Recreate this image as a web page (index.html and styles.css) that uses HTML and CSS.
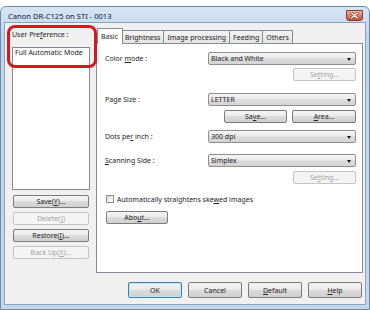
FILE: index.html
```html
<!DOCTYPE html>
<html lang="en">
<head>
    <meta charset="UTF-8">
    <title>Canon DR-C125 on STI - 0013</title>
    <link rel="stylesheet" href="styles.css">
</head>
<body>
    <div class="window">
        <header class="titlebar">
            <span class="title">Canon DR-C125 on STI - 0013</span>
            <button class="close-btn" aria-label="Close">
                <svg width="9" height="7" viewBox="0 0 9 7">
                    <path d="M1.5 1 L7.5 6 M7.5 1 L1.5 6" stroke="#7a3326" stroke-width="2.6" stroke-linecap="round"/>
                    <path d="M1.5 1 L7.5 6 M7.5 1 L1.5 6" stroke="#ffffff" stroke-width="1.4" stroke-linecap="round"/>
                </svg>
            </button>
        </header>

        <div class="client">
            <div class="main">
                <!-- user preference list -->
                <aside class="prefs">
                    <div class="prefs-label">User Pre<span class="key">f</span>erence :</div>
                    <ul class="pref-list">
                        <li>Full Automatic Mode</li>
                    </ul>
                    <button class="btn side-btn">Save(<span class="key">Y</span>)...</button>
                    <button class="btn side-btn" disabled>Delete(<span class="key">J</span>)</button>
                    <button class="btn side-btn">Restore(<span class="key">I</span>)...</button>
                    <button class="btn side-btn" disabled>Back Up(<span class="key">X</span>)...</button>
                </aside>

                <!-- tab control -->
                <section class="tabs">
                    <nav class="tab-strip">
                        <span class="tab active">Basic</span>
                        <span class="tab">Brightness</span>
                        <span class="tab">Image processing</span>
                        <span class="tab">Feeding</span>
                        <span class="tab">Others</span>
                    </nav>
                    <div class="tab-panel">
                        <div class="field">
                            <span>Color <span class="key">m</span>ode :</span>
                            <div class="dropdown">Black and White</div>
                        </div>
                        <div class="button-row row-setting">
                            <button class="btn panel-btn" disabled>Se<span class="key">t</span>ting...</button>
                        </div>

                        <div class="field row-page">
                            <span>Page Size :</span>
                            <div class="dropdown">LETTER</div>
                        </div>
                        <div class="button-row row-save">
                            <button class="btn panel-btn">Sa<span class="key">v</span>e...</button>
                            <button class="btn panel-btn area-btn"><span class="key">A</span>rea...</button>
                        </div>

                        <div class="field row-dpi">
                            <span>Dots pe<span class="key">r</span> inch :</span>
                            <div class="dropdown">300 dpi</div>
                        </div>

                        <div class="field row-side">
                            <span><span class="key">S</span>canning Side :</span>
                            <div class="dropdown">Simplex</div>
                        </div>
                        <div class="button-row row-setting2">
                            <button class="btn panel-btn" disabled>Se<span class="key">t</span>ting...</button>
                        </div>

                        <label class="check-row">
                            <span class="checkbox"></span>
                            <span>Automatically straightens ske<span class="key">w</span>ed images</span>
                        </label>

                        <button class="btn about-btn">Abo<span class="key">u</span>t...</button>
                    </div>
                </section>
            </div>

            <footer class="actions">
                <button class="btn action-btn default">OK</button>
                <button class="btn action-btn">Cancel</button>
                <button class="btn action-btn"><span class="key">D</span>efault</button>
                <button class="btn action-btn"><span class="key">H</span>elp</button>
            </footer>
        </div>

        <div class="highlight"></div>
    </div>
</body>
</html>
```

FILE: styles.css
```css
body {
    margin: 0;
    background: #ffffff;
    font-family: 'Noto Sans', 'Open Sans', sans-serif;
    font-size: 7px;
    color: #222222;
}

.window {
    position: relative;
    margin-top: 6px;
    height: 304px;
    box-sizing: border-box;
    border: 1px solid #6f8aa6;
    border-radius: 6px 6px 0 0;
    padding: 0 3px 4px;
    background: linear-gradient(#d6e5f4, #bed4eb 30px, #c3d7ec);
    display: flex;
    flex-direction: column;
}

.titlebar {
    height: 15px;
    display: flex;
    align-items: center;
}

.title {
    padding: 2px 0 0 4px;
    font-size: 7.6px;
    color: #14202c;
}

.close-btn {
    margin-left: auto;
    margin-right: 3px;
    align-self: flex-start;
    margin-top: 3px;
    width: 17px;
    height: 11px;
    padding: 0;
    border: 1px solid #8a3a2c;
    border-radius: 0 0 3px 3px;
    background: linear-gradient(#ecb3a3, #df7f66 50%, #c9503a);
    display: flex;
    align-items: center;
    justify-content: center;
}

.client {
    flex: 1;
    background: #f0f0f0;
    border: 1px solid #8ea3bb;
    padding: 5px 2px 6px 7px;
    display: flex;
    flex-direction: column;
}

.main {
    flex: 1;
    display: flex;
    gap: 6px;
}

.key {
    text-decoration: underline;
}

/* left column */
.prefs {
    width: 78px;
    display: flex;
    flex-direction: column;
}

.prefs-label {
    line-height: 14px;
    height: 14px;
}

.pref-list {
    list-style: none;
    margin: 5px 0 0;
    padding: 0;
    height: 143px;
    box-sizing: border-box;
    background: #ffffff;
    border: 1px solid #828790;
}

.pref-list li {
    line-height: 10px;
    padding: 0 2px;
}

.btn {
    font-family: inherit;
    font-size: 7px;
    color: #222;
    padding: 0;
    box-sizing: border-box;
    border: 1px solid #7b7b7b;
    border-radius: 2px;
    background: linear-gradient(#f4f4f4, #ebebeb 45%, #dcdcdc 50%, #cfcfcf);
    text-align: center;
}

.btn:disabled {
    color: #a2a2a2;
    border-color: #c4c4c4;
    background: #f4f4f4;
}

.side-btn {
    width: 76px;
    height: 13px;
    margin: 4px 0 0 1px;
}

.side-btn:first-of-type {
    margin-top: 5px;
}

/* tab control */
.tabs {
    width: 267px;
    display: flex;
    flex-direction: column;
}

.tab-strip {
    height: 15px;
    display: flex;
    align-items: flex-end;
    padding-left: 3px;
}

.tab {
    height: 13px;
    box-sizing: border-box;
    padding: 0 3px;
    margin-left: -1px;
    border: 1px solid #898c95;
    border-bottom: none;
    background: linear-gradient(#f2f2f2, #e4e4e4);
    display: flex;
    align-items: center;
}

.tab.active {
    height: 16px;
    margin: 0 -1px -1px -2px;
    padding: 0 4px 1px 3px;
    background: #ffffff;
    position: relative;
    z-index: 1;
}

.tab-panel {
    flex: 1;
    background: #ffffff;
    border: 1px solid #898c95;
    padding: 8px 6px 0 8px;
}

.field {
    height: 13px;
    display: flex;
    align-items: center;
    justify-content: space-between;
}

.dropdown {
    position: relative;
    width: 148px;
    height: 13px;
    box-sizing: border-box;
    padding-left: 2px;
    border: 1px solid #8f8f8f;
    border-radius: 2px;
    background: linear-gradient(#f4f4f4, #eaeaea 45%, #dddddd 50%, #d3d3d3);
    display: flex;
    align-items: center;
}

.dropdown::after {
    content: "";
    position: absolute;
    right: 4px;
    top: 5px;
    border-left: 2.5px solid transparent;
    border-right: 2.5px solid transparent;
    border-top: 3px solid #1a1a1a;
}

.button-row {
    display: flex;
    justify-content: flex-end;
    gap: 5px;
}

.panel-btn {
    width: 63px;
    height: 13px;
}

.area-btn {
    width: 64px;
}

.row-setting { margin-top: 3px; }
.row-page { margin-top: 12px; }
.row-save { margin-top: 4px; }
.row-dpi { margin-top: 7px; }
.row-side { margin-top: 11px; }
.row-setting2 { margin-top: 4px; }

.check-row {
    margin-top: 10px;
    height: 10px;
    display: flex;
    align-items: center;
    gap: 3px;
    padding-left: 1px;
}

.checkbox {
    width: 8px;
    height: 8px;
    box-sizing: border-box;
    border: 1px solid #8f8f8f;
    background: linear-gradient(135deg, #dcdcdc, #fbfbfb);
}

.about-btn {
    display: block;
    margin: 7px 0 0 1px;
    width: 62px;
    height: 13px;
}

/* dialog buttons */
.actions {
    margin-top: 9px;
    display: flex;
    justify-content: flex-end;
    gap: 6px;
    padding-right: 1px;
}

.action-btn {
    width: 54px;
    height: 16px;
}

.action-btn.default {
    border-color: #3c7fb1;
    box-shadow: inset 0 0 0 1px #bfe3f8;
}

/* red annotation frame */
.highlight {
    position: absolute;
    left: 6px;
    top: 18px;
    width: 90px;
    height: 43px;
    box-sizing: border-box;
    border: 3px solid #d8181f;
    border-radius: 8px;
}
```
